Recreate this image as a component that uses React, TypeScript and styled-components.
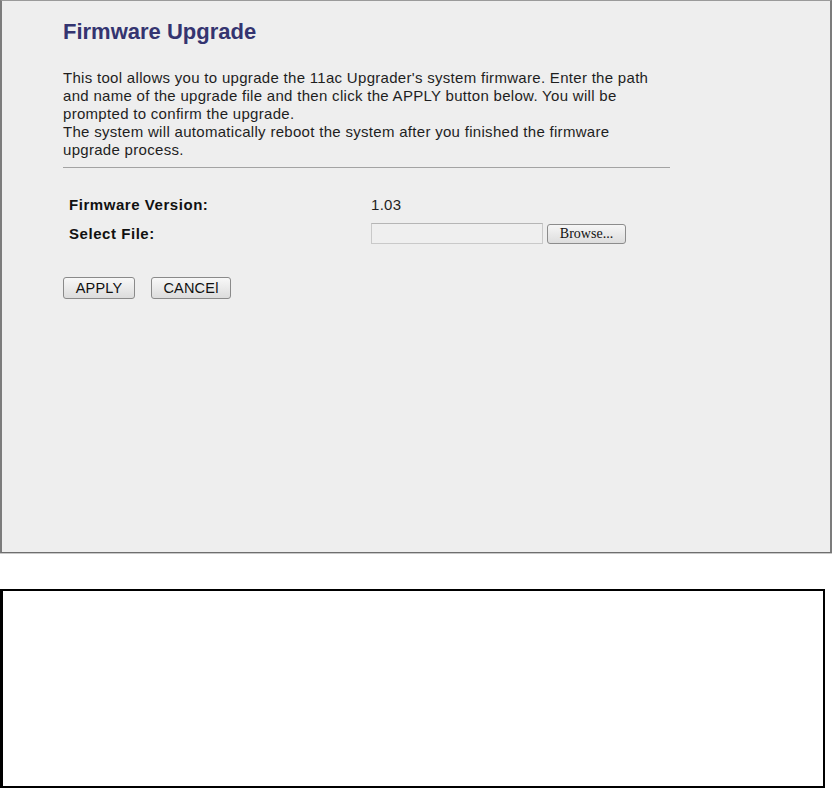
import React from "react";
import styled, { createGlobalStyle } from "styled-components";

const Global = createGlobalStyle`
  html, body { margin: 0; padding: 0; background: #ffffff; }
  body { font-family: "Liberation Sans", Arial, sans-serif; }
`;

const Page = styled.div`
  width: 832px;
  display: flex;
  flex-direction: column;
`;

const Panel = styled.section`
  box-sizing: border-box;
  width: 832px;
  height: 553px;
  background: #eeeeee;
  border-top: 1px solid #9a9a9a;
  border-left: 2px solid #7c7c7c;
  border-right: 2px solid #7c7c7c;
  border-bottom: 1px solid #6e6e6e;
  box-shadow: 0 1px 0 #c8c8c8;
  padding: 18px 0 0 61px;
`;

const Content = styled.div`
  width: 607px;
  display: flex;
  flex-direction: column;
`;

const Title = styled.h1`
  margin: 0;
  font-size: 22px;
  line-height: 25px;
  font-weight: bold;
  color: #343470;
`;

const Intro = styled.p`
  margin: 25px 0 0 0;
  width: 596px;
  font-size: 15px;
  letter-spacing: 0.3px;
  line-height: 18px;
  color: #1e1e1e;
`;

const Rule = styled.hr`
  margin: 8px 0 0 0;
  border: 0;
  border-top: 1px solid #a3a3a3;
  height: 0;
  width: 607px;
`;

const FormGrid = styled.div`
  margin-top: 22px;
  display: grid;
  grid-template-columns: 302px 1fr;
  grid-auto-rows: 29px;
  padding-left: 6px;
  font-size: 15px;
  color: #1e1e1e;
`;

const Label = styled.div`
  font-weight: bold;
  letter-spacing: 0.55px;
  display: flex;
  align-items: center;
  color: #111111;
`;

const Value = styled.div`
  display: flex;
  align-items: center;
  gap: 4px;
  letter-spacing: 0.3px;
`;

const FileBox = styled.div`
  box-sizing: border-box;
  width: 172px;
  height: 21px;
  background: #efefef;
  border: 1px solid #c9c9c9;
  border-top-color: #b5b5b5;
`;

const BrowseButton = styled.button`
  box-sizing: border-box;
  width: 79px;
  height: 20px;
  padding: 0;
  font-family: "Liberation Serif", "Times New Roman", serif;
  font-size: 14px;
  color: #111;
  background: linear-gradient(#f6f6f6, #dddddd);
  border: 1px solid #8c8c8c;
  border-radius: 3px;
`;

const Actions = styled.div`
  margin-top: 29px;
  display: flex;
  gap: 16px;
`;

const ActionButton = styled.button<{ $w: number }>`
  box-sizing: border-box;
  width: ${(p) => p.$w}px;
  height: 22px;
  padding: 0;
  font-family: "Liberation Sans", Arial, sans-serif;
  font-size: 14.5px;
  letter-spacing: 0.2px;
  color: #111;
  background: linear-gradient(#f8f8f8, #dcdcdc);
  border: 1px solid #8a8a8a;
  border-radius: 3px;
`;

const LowerBox = styled.div`
  box-sizing: border-box;
  margin-top: 36px;
  width: 825px;
  height: 199px;
  background: #ffffff;
  border: 2px solid #000000;
  border-left-width: 3px;
`;

export default function App() {
  return (
    <>
      <Global />
      <Page>
        <Panel>
          <Content>
            <Title>Firmware Upgrade</Title>
            <Intro>
              This tool allows you to upgrade the 11ac Upgrader's system firmware. Enter the path
              and name of the upgrade file and then click the APPLY button below. You will be
              prompted to confirm the upgrade.
              <br />
              The system will automatically reboot the system after you finished the firmware
              upgrade process.
            </Intro>
            <Rule />
            <FormGrid>
              <Label>Firmware Version:</Label>
              <Value>1.03</Value>
              <Label>Select File:</Label>
              <Value>
                <FileBox />
                <BrowseButton type="button">Browse...</BrowseButton>
              </Value>
            </FormGrid>
            <Actions>
              <ActionButton type="button" $w={72}>APPLY</ActionButton>
              <ActionButton type="button" $w={80}>CANCEl</ActionButton>
            </Actions>
          </Content>
        </Panel>
        <LowerBox />
      </Page>
    </>
  );
}
